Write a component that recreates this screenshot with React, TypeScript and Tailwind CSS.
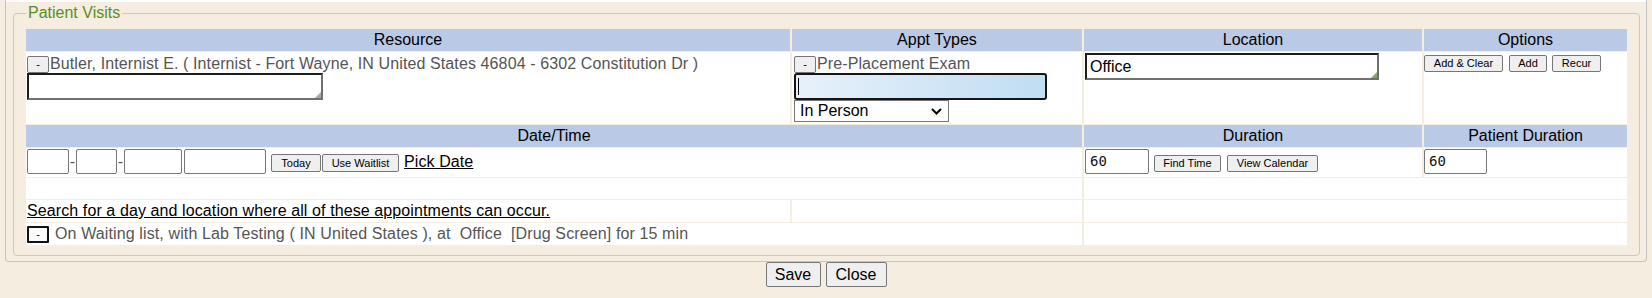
import type { ReactNode } from 'react'

const smallBtn =
  'flex items-center justify-center bg-[#efefef] border border-[#767676] rounded-[2px] text-black text-[11px] leading-none'

const hdr = 'bg-[#b9c9e6] text-center text-[16px] leading-[22px] text-black'

function Grip({ color }: { color: string }) {
  return (
    <svg className="absolute right-0 bottom-0" width="6" height="6" viewBox="0 0 6 6">
      <path d="M6 0 L6 6 L0 6 Z" fill={color} />
    </svg>
  )
}

function InsetBox({ className, grip, children }: { className: string; grip: string; children?: ReactNode }) {
  return (
    <div
      className={`relative bg-white border-2 border-t-[#1c1c1c] border-l-[#1c1c1c] border-r-[#707070] border-b-[#707070] ${className}`}
    >
      {children}
      <Grip color={grip} />
    </div>
  )
}

function TextInput({ w, value }: { w: string; value?: string }) {
  return (
    <div
      className={`${w} h-[25px] bg-white border border-[#767676] rounded-[2px] flex items-center pl-[4px] font-['DejaVu_Sans_Mono',monospace] text-[14px] text-[#111]`}
    >
      {value}
    </div>
  )
}

function Dash() {
  return <span className="w-[7px] text-center text-[#555] text-[16px] leading-[18px]">-</span>
}

export default function App() {
  return (
    <div className="w-[1652px] h-[298px] bg-[#f4ede0] font-['Liberation_Sans',Arial,sans-serif] text-[16px]">
      <div className="mx-[5px] border-x border-b border-[#c4c4c4] rounded-b-[4px] pb-[5px]">
        <div className="h-[2px] bg-white" />
        <fieldset className="mt-[2px] ml-[7px] w-[1627px] border border-[#c9c9c9] rounded-[4px] px-[12px] pt-[7px] pb-[10px]">
          <legend className="px-[2px] text-[16px] leading-[18px] text-[#5e8c1e]">Patient Visits</legend>
          <div className="grid grid-cols-[764px_290px_338px_203px] grid-rows-[22px_72px_22px_29px_21px_22px_22px] gap-x-[2px] gap-y-px">
            {/* header 1 */}
            <div className={hdr}>Resource</div>
            <div className={hdr}>Appt Types</div>
            <div className={hdr}>Location</div>
            <div className={hdr}>Options</div>

            {/* row 1 */}
            <div className="bg-white pl-px pt-[3px]">
              <div className="flex items-center">
                <button className={`${smallBtn} w-[22px] h-[17px]`}>-</button>
                <span className="ml-px text-[#555] leading-[18px] tracking-[0.11px]">
                  Butler, Internist E. ( Internist - Fort Wayne, IN United States 46804 - 6302 Constitution Dr )
                </span>
              </div>
              <InsetBox className="w-[296px] h-[27px]" grip="#a8a8a8" />
            </div>
            <div className="bg-white pl-[2px] pt-[3px]">
              <div className="flex items-center">
                <button className={`${smallBtn} w-[22px] h-[17px]`}>-</button>
                <span className="ml-px text-[#555] leading-[18px] tracking-[0.11px]">Pre-Placement Exam</span>
              </div>
              <div className="w-[253px] h-[27px] border-2 border-[#151515] rounded-[3px] bg-gradient-to-r from-[#e7f1fb] to-[#c0ddf2] flex items-center">
                <span className="ml-[2px] w-px h-[17px] bg-black" />
              </div>
              <div className="w-[155px] h-[22px] bg-white border border-[#767676] flex items-center justify-between pl-[5px] pr-[6px] text-black leading-[18px]">
                <span>In Person</span>
                <svg width="11" height="7" viewBox="0 0 11 7">
                  <path d="M1 1 L5.5 5.5 L10 1" fill="none" stroke="#000" strokeWidth="2" />
                </svg>
              </div>
            </div>
            <div className="bg-white pl-px pt-px">
              <InsetBox className="w-[294px] h-[27px] flex items-center pl-[3px] text-black" grip="#7fb04c">
                Office
              </InsetBox>
            </div>
            <div className="bg-white pt-[3px] flex items-start">
              <button className={`${smallBtn} w-[79px] h-[17px]`}>Add &amp; Clear</button>
              <button className={`${smallBtn} ml-[6px] w-[38px] h-[17px]`}>Add</button>
              <button className={`${smallBtn} ml-[5px] w-[49px] h-[17px]`}>Recur</button>
            </div>

            {/* header 2 */}
            <div className={`${hdr} col-span-2`}>Date/Time</div>
            <div className={hdr}>Duration</div>
            <div className={hdr}>Patient Duration</div>

            {/* row 2 */}
            <div className="col-span-2 bg-white pl-px pt-px flex items-start">
              <TextInput w="w-[42px]" />
              <div className="h-[25px] flex items-center">
                <Dash />
              </div>
              <TextInput w="w-[41px]" />
              <div className="h-[25px] flex items-center">
                <Dash />
              </div>
              <TextInput w="w-[58px]" />
              <div className="ml-[2px]">
                <TextInput w="w-[82px]" />
              </div>
              <button className={`${smallBtn} ml-[5px] mt-[5px] w-[50px] h-[18px]`}>Today</button>
              <button className={`${smallBtn} ml-px mt-[5px] w-[77px] h-[18px]`}>Use Waitlist</button>
              <a className="ml-[5px] mt-[4px] leading-[18px] text-black underline tracking-[0.1px]">Pick Date</a>
            </div>
            <div className="bg-white pl-px pt-px flex items-start">
              <TextInput w="w-[64px]" value="60" />
              <button className={`${smallBtn} ml-[5px] mt-[6px] w-[67px] h-[17px]`}>Find Time</button>
              <button className={`${smallBtn} ml-[6px] mt-[6px] w-[91px] h-[17px]`}>View Calendar</button>
            </div>
            <div className="bg-white pt-px">
              <TextInput w="w-[63px]" value="60" />
            </div>

            {/* blank row */}
            <div className="col-span-2 bg-white" />
            <div className="col-span-2 bg-white" />

            {/* search row */}
            <div className="bg-white pl-px flex items-center">
              <a className="text-black underline leading-[18px] tracking-[0.1px]">
                Search for a day and location where all of these appointments can occur.
              </a>
            </div>
            <div className="bg-white" />
            <div className="col-span-2 bg-white" />

            {/* waiting row */}
            <div className="col-span-2 bg-white pl-px flex items-center">
              <button className="w-[22px] h-[17px] bg-[#fafafa] border-2 border-[#111] rounded-[1px] text-black text-[11px] leading-none flex items-center justify-center">
                -
              </button>
              <span className="ml-[6px] text-[#555] leading-[18px] whitespace-pre tracking-[0.12px]">
                On Waiting list, with Lab Testing ( IN United States ), at  Office  [Drug Screen] for 15 min
              </span>
            </div>
            <div className="col-span-2 bg-white" />
          </div>
        </fieldset>
      </div>
      <div className="flex justify-center gap-[5px]">
        <button className="w-[55px] h-[25px] bg-[#efefef] border border-[#767676] rounded-[2px] text-[16px] text-black">
          Save
        </button>
        <button className="w-[61px] h-[25px] bg-[#efefef] border border-[#767676] rounded-[2px] text-[16px] text-black">
          Close
        </button>
      </div>
    </div>
  )
}
